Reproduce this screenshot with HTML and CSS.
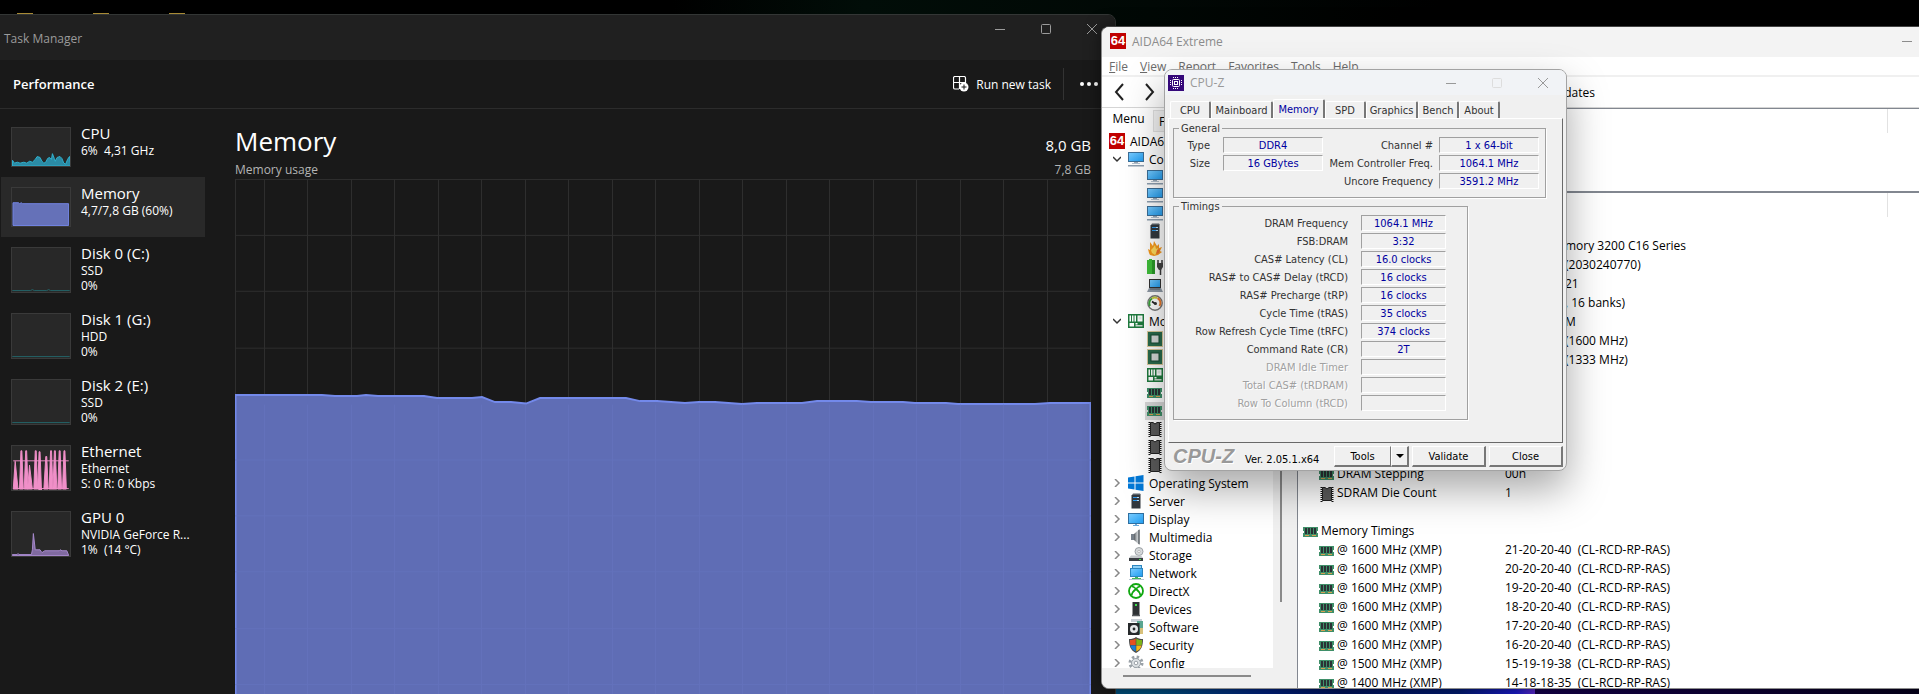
FILE: index.html
```html
<!DOCTYPE html>
<html lang="en">
<head>
    <meta charset="UTF-8">
    <meta name="viewport" content="width=device-width, initial-scale=1.0">
    <title>Desktop</title>
    <link rel="stylesheet" href="styles.css">
</head>
<body>
    <!-- Icon sprite -->
    <svg class="sprite" xmlns="http://www.w3.org/2000/svg">
        <defs>
            <linearGradient id="screenFill" x1="0" y1="0" x2="1" y2="1">
                <stop offset="0" stop-color="#7accff"/>
                <stop offset="1" stop-color="#1f9cf0"/>
            </linearGradient>
            <linearGradient id="metalFill" x1="0" y1="0" x2="1" y2="0">
                <stop offset="0" stop-color="#555b60"/>
                <stop offset="0.6" stop-color="#c9cdd0"/>
                <stop offset="1" stop-color="#777d82"/>
            </linearGradient>
        </defs>
        <symbol id="i-min" viewBox="0 0 10 10"><path d="M0 5.5h10" stroke="currentColor"/></symbol>
        <symbol id="i-max" viewBox="0 0 10 10"><rect x=".5" y=".5" width="9" height="9" rx="1" fill="none" stroke="currentColor"/></symbol>
        <symbol id="i-close" viewBox="0 0 10 10"><path d="M0 0l10 10M10 0L0 10" stroke="currentColor"/></symbol>
        <symbol id="i-monitor" viewBox="0 0 16 16">
            <rect x=".5" y="1.5" width="15" height="9" fill="url(#screenFill)" stroke="#3c6e96"/>
            <path d="M6 11h4v2H6z" fill="#9aa9b8"/><path d="M4 12h8v1H4z" fill="#b5c2cf"/><path d="M0 14h16v1.5H0z" fill="#8e9fb0"/>
        </symbol>
        <symbol id="i-display" viewBox="0 0 16 16">
            <rect x=".5" y="2.5" width="15" height="10" fill="url(#screenFill)" stroke="#2f6fa0"/>
            <path d="M7 13h2v1H7zM5 14h6v1H5z" fill="#6aa8d8"/>
        </symbol>
        <symbol id="i-server" viewBox="0 0 16 16">
            <path d="M5 .5h7l1 1.500H4z" fill="#5a626a"/><rect x="3.500" y="2" width="9" height="13.500" fill="#33393f"/>
            <path d="M5 4.500h6M5 7.500h6" stroke="#2d9bf0"/><path d="M9 4h2v1H9zM9 7h2v1H9z" fill="#b8e0ff"/>
        </symbol>
        <symbol id="i-fire" viewBox="0 0 16 16">
            <path d="M3 1l3 4 1-5 3 5 2-2 0 4 3-1-2 4 2 1-4 3-4 1-4-1-1-2-1-4 2 1z" fill="#f79a1c"/>
            <path d="M6 7l2-3 1 4 2-1-1 4-2 3-3-2-1-3z" fill="#ffdc5e"/><path d="M10 9l3-1-1 4-3 1z" fill="#f0702a"/>
        </symbol>
        <symbol id="i-power" viewBox="0 0 16 16">
            <path d="M2 0h3v1h3v14H0V1h2z" fill="#3fbf3a"/><path d="M5 1h3v14H5z" fill="#2b9a29"/>
            <path d="M11 1v4M15 1v4M13.500 10v6" stroke="#3a3a3a" stroke-width="1.500"/><path d="M10 4h6v4l-2 3h-2l-2-3z" fill="#444"/>
        </symbol>
        <symbol id="i-laptop" viewBox="0 0 16 16">
            <rect x="2.500" y="2.500" width="11" height="8" fill="url(#screenFill)" stroke="#333"/>
            <path d="M2 11h12l2 4H0z" fill="#8e99a5"/><path d="M3 12h10" stroke="#55606b"/>
        </symbol>
        <symbol id="i-gauge" viewBox="0 0 16 16">
            <circle cx="8" cy="8" r="7.200" fill="#fff" stroke="#777" stroke-width="1.400"/>
            <path d="M3 11A5.500 5.500 0 0 1 5 3.500" stroke="#3aa33a" stroke-width="2" fill="none"/>
            <path d="M5 3.500A5.500 5.500 0 0 1 10 3" stroke="#c8cf3c" stroke-width="2" fill="none"/>
            <path d="M10.500 3A5.500 5.500 0 0 1 12.500 11" stroke="#e8792b" stroke-width="2" fill="none"/>
            <path d="M8.500 9L5 6.500" stroke="#222" stroke-width="1.600"/><circle cx="8.500" cy="8.500" r="1.500" fill="#333"/>
        </symbol>
        <symbol id="i-board" viewBox="0 0 16 16">
            <path d="M0 1h16v14H0z" fill="#1f7a3e"/>
            <path d="M1.500 2.500h1.500v6H1.500zM4 2.500h1.500v6H4zM6.500 2.500H8v6H6.500zM9.500 2.500h5v6h-5zM1.500 10H6v3.500H1.500zM7.500 10h2v1.500h-2z" fill="#fff"/>
            <path d="M7.500 12H14.500V13.500H7.500z" fill="#c9d8ce"/><path d="M10.500 3.500h3v3h-3z" fill="#dfe8e2"/>
        </symbol>
        <symbol id="i-chip" viewBox="0 0 16 16">
            <rect x=".5" y=".5" width="15" height="15" fill="none" stroke="#b49338" stroke-dasharray="1 1"/>
            <rect x="1" y="1" width="14" height="14" fill="#2a6b4c"/><rect x="4" y="4" width="8" height="8" fill="#d3d8d6" stroke="#174a33"/>
        </symbol>
        <symbol id="i-ram" viewBox="0 0 16 16">
            <path d="M0 3h15v4h-1v2h1v4H0V9h1V7H0z" fill="#3f8f69"/>
            <path d="M2 4h2v6H2zM5 4h2v6H5zM8 4h2v6H8zM11 4h2v6h-2z" fill="#2b3135"/>
            <path d="M2 11.500h4M9 11.500h4" stroke="#d8a050"/>
        </symbol>
        <symbol id="i-ic" viewBox="0 0 16 16">
            <path d="M2.500 1v15M13.500 1v15" stroke="#111" stroke-width="2" stroke-dasharray="1 1"/>
            <path d="M3.500 1.500h2.500l2 1.500 2-1.500h2.500v13h-9z" fill="#5b5b5b" stroke="#222"/>
        </symbol>
        <symbol id="i-windows" viewBox="0 0 16 16">
            <path d="M0 2.500L6.500 1.500V7.500H0zM7.500 1.300L15.500 0V7.500H7.500zM0 8.500H6.500V14.500L0 13.500zM7.500 8.500H15.500V16L7.500 14.700z" fill="#0078d7"/>
        </symbol>
        <symbol id="i-speaker" viewBox="0 0 16 16">
            <path d="M3 5h3v6H3z" fill="#77808a"/><path d="M6 5l5.500-5v16L6 11z" fill="url(#metalFill)"/><path d="M11 1v14" stroke="#50565c"/>
        </symbol>
        <symbol id="i-storage" viewBox="0 0 16 16">
            <circle cx="11" cy="4.500" r="4" fill="#d7dadc" stroke="#9da2a6"/><circle cx="11" cy="4.500" r="1.200" fill="#fff" stroke="#999" stroke-width=".6"/>
            <path d="M3 8.500h10l2 2.500H1z" fill="#c4c8cb"/><path d="M1 11h14v3H1z" fill="#3b3f43"/><path d="M11 12h2v1h-2z" fill="#4be04b"/>
        </symbol>
        <symbol id="i-network" viewBox="0 0 16 16">
            <rect x="4.500" y=".5" width="9" height="7" fill="#8fd0f5" stroke="#2d86c0"/>
            <rect x="2.500" y="3.500" width="12" height="8" fill="url(#screenFill)" stroke="#2d86c0"/>
            <path d="M7 12h3v2H7zM4 13h9v2H4z" fill="#44b85a"/><path d="M1 14h15v1H1z" fill="#b9c6d1"/>
        </symbol>
        <symbol id="i-xbox" viewBox="0 0 16 16">
            <circle cx="8" cy="8" r="7" fill="#fff" stroke="#10a810" stroke-width="1.800"/>
            <path d="M4 3.500c2 0 3 1.500 4 2.500 1-1 2-2.500 4-2.500M3.500 12.500C4 9.500 6 7.500 8 6c2 1.500 4 3.500 4.500 6.500" fill="none" stroke="#10a810" stroke-width="1.700"/>
        </symbol>
        <symbol id="i-device" viewBox="0 0 16 16">
            <rect x="4.500" y="1" width="7" height="13" fill="#2e3235"/><path d="M7 3h2v2H7z" fill="#3de04a"/><path d="M4 14.500h8" stroke="#55595c" stroke-width="1.500"/>
        </symbol>
        <symbol id="i-software" viewBox="0 0 16 16">
            <path d="M3 0h11v3H3z" fill="#c8cfd6"/><path d="M9 2h6v13H9z" fill="#5aa590"/><path d="M12 9h3v6h-3z" fill="#d8c07a"/>
            <path d="M0 4h11.500v12H0z" fill="#26292b"/><circle cx="6" cy="10" r="4" fill="#e6e8ea"/><circle cx="6" cy="10" r="1.400" fill="#26292b"/>
        </symbol>
        <symbol id="i-shield" viewBox="0 0 16 16">
            <path d="M8 0c2 1.500 4 2 7 2 0 6-1 11-7 14C2 13 1 8 1 2c3 0 5-.5 7-2z" fill="#4a4a4a"/>
            <path d="M7.700 1.500V8H2.200C2 6 2 4.500 2 3c2.500 0 4-.5 5.700-1.500z" fill="#e8501e"/><path d="M8.300 1.500V8h5.500c.2-2 .2-3.500.2-5-2.500 0-4-.5-5.700-1.500z" fill="#7cb518"/>
            <path d="M7.700 8.500v6C4.500 13 3 11 2.300 8.500z" fill="#1b7fd6"/><path d="M8.300 8.500v6c3.200-1.500 4.700-3.500 5.400-6z" fill="#f7b916"/>
        </symbol>
        <symbol id="i-gear" viewBox="0 0 16 16">
            <circle cx="8" cy="8" r="6" fill="none" stroke="#9aa1a7" stroke-width="3" stroke-dasharray="2.400 2.300"/>
            <circle cx="8" cy="8" r="4.500" fill="#dde1e4" stroke="#9aa1a7"/><circle cx="8" cy="8" r="1.800" fill="#fff" stroke="#9aa1a7"/>
        </symbol>
        <symbol id="i-down" viewBox="0 0 8 8"><path d="M0 2l4 4 4-4" fill="none" stroke="#333" stroke-width="1.500"/></symbol>
        <symbol id="i-right" viewBox="0 0 8 8"><path d="M2 0l4 4-4 4" fill="none" stroke="#888" stroke-width="1.500"/></symbol>
    </svg>

    <!-- Desktop icons peeking above the first window -->
    <div class="folders"><span></span><span></span><span></span></div>

    <!-- Task Manager -->
    <section class="window taskmgr">
        <header class="tm-title">
            <span>Task Manager</span>
            <div class="controls">
                <button aria-label="Minimize"><svg><use href="#i-min"/></svg></button>
                <button aria-label="Maximize"><svg><use href="#i-max"/></svg></button>
                <button aria-label="Close"><svg><use href="#i-close"/></svg></button>
            </div>
        </header>
        <div class="tm-toolbar">
            <h1>Performance</h1>
            <button class="run-task">
                <svg viewBox="0 0 16 16" fill="none" stroke="#fff">
                    <path d="M6.500 .5H2A1.500 1.500 0 0 0 .5 2v9.500A1.500 1.500 0 0 0 2 13h4M.5 6.500h12V2A1.500 1.500 0 0 0 11 .5H6.500V13" stroke-width="1.200"/>
                    <circle cx="11" cy="11" r="4.500" fill="#fff" stroke="none"/><path d="M11 8.500v5M8.500 11h5" stroke="#191919"/>
                </svg>
                Run new task
            </button>
            <button class="more" aria-label="See more"><i></i><i></i><i></i></button>
        </div>
        <div class="tm-body">
            <nav class="tm-side">
                <a href="#" class="perf">
                    <svg class="mini" viewBox="0 0 60 40">
                        <path d="M0 40v-6l2 3 3-1 3 1 4-1 3 1 3-2 3 1 3-3 2-3 3 1 2 4 2 2 2-1 2-4 2-1 2 2 1-6 2 5 1 3 2-4 3-1 2 2 2 5 2 1 2-5 2-3 1 7v3z" fill="#2b8ba5" stroke="#2fb4d2"/>
                    </svg>
                    <span><b>CPU</b><small>6%&nbsp; 4,31 GHz</small></span>
                </a>
                <a href="#" class="perf active">
                    <svg class="mini" viewBox="0 0 60 40">
                        <path d="M.5 39.500V15.500h6l1 1 2-1 1 1h48.500v23z" fill="#6571b8" stroke="#7486e8"/>
                    </svg>
                    <span><b>Memory</b><small>4,7/7,8 GB (60%)</small></span>
                </a>
                <a href="#" class="perf tall">
                    <svg class="mini" viewBox="0 0 60 46"><path d="M0 44.500h19l2-1 2 1h13l2-1 2 1h20" fill="none" stroke="#24666a"/></svg>
                    <span><b>Disk 0 (C:)</b><small>SSD</small><small>0%</small></span>
                </a>
                <a href="#" class="perf tall">
                    <svg class="mini" viewBox="0 0 60 46"><path d="M0 44.500h60" stroke="#24666a"/></svg>
                    <span><b>Disk 1 (G:)</b><small>HDD</small><small>0%</small></span>
                </a>
                <a href="#" class="perf tall">
                    <svg class="mini" viewBox="0 0 60 46"><path d="M0 44.500h60" stroke="#24666a"/></svg>
                    <span><b>Disk 2 (E:)</b><small>SSD</small><small>0%</small></span>
                </a>
                <a href="#" class="perf tall">
                    <svg class="mini" viewBox="0 0 60 46">
                        <path d="M1 45L3 16l3 29zM7.500 45l1.500-40h1l1.500 40zM12.500 45L14 5h1l1.500 40zM16 45l2-25 3 25zM22.500 45L24 5h1l1.500 40zM26.500 45L28 6h1l1.500 40zM33 45l2-34h1l1.500 34zM38.500 45L40 5h1l1.500 40zM42.500 45L44 5h1l1.500 40zM47.500 45L49 5h1l1.500 40zM52.500 45L54 5h1l1.500 40z" fill="#f08fc8" stroke="#f08fc8"/>
                        <path d="M1 15.500h58M1 44.500h58" stroke="#f08fc8"/>
                    </svg>
                    <span><b>Ethernet</b><small>Ethernet</small><small>S: 0 R: 0 Kbps</small></span>
                </a>
                <a href="#" class="perf tall">
                    <svg class="mini" viewBox="0 0 60 46">
                        <path d="M0 44.500h5l1-1 1 1h13l1-5 1-17 2 17 5 0 2 3 3-2 15 0 1-1 2 1 5 0 2 5H0z" fill="#806aa0" stroke="#a98ad0"/>
                    </svg>
                    <span><b>GPU 0</b><small>NVIDIA GeForce R...</small><small>1%&nbsp; (14 °C)</small></span>
                </a>
            </nav>
            <main class="tm-main">
                <div class="main-head"><h2>Memory</h2><span>8,0 GB</span></div>
                <div class="main-sub"><span>Memory usage</span><span>7,8 GB</span></div>
                <svg class="chart" viewBox="0 0 856 562" preserveAspectRatio="none">
                    <path class="grid" d="M0 .5H856M0 56.500H856M0 112.500H856M0 169.500H856M0 225.500H856M0 281.500H856M0 337.500H856M0 393.500H856M0 450.500H856M0 506.500H856
                        M.5 0V562M29.500 0V562M72.500 0V562M116.500 0V562M159.500 0V562M203.500 0V562M246.500 0V562M290.500 0V562M333.500 0V562M377.500 0V562M420.500 0V562M464.500 0V562M507.500 0V562M551.500 0V562M594.500 0V562M638.500 0V562M681.500 0V562M725.500 0V562M768.500 0V562M812.500 0V562M855.500 0V562"/>
                    <path class="usage" d="M.5 570V216.500H87L100 217.500H122L131 216.500L143 217.500H189L202 219.500H237L247 218.500L260 223.500H276L291 225L305 219.500H391L405 222.500H422L450 224.500L464 223.500H480L507 225.500L522 224.500H567L582 222.500H622L636 223.500H668L680 224.500H711L723 225.500H800L815 224.500H855.500V570z"/>
                    <path class="grid over" d="M0 281.500H856M0 337.500H856M0 393.500H856M0 450.500H856M0 506.500H856
                        M29.500 226V562M72.500 226V562M116.500 226V562M159.500 226V562M203.500 226V562M246.500 226V562M290.500 226V562M333.500 226V562M377.500 226V562M420.500 226V562M464.500 226V562M507.500 226V562M551.500 226V562M594.500 226V562M638.500 226V562M681.500 226V562M725.500 226V562M768.500 226V562M812.500 226V562"/>
                </svg>
            </main>
        </div>
    </section>

    <!-- AIDA64 -->
    <section class="window aida">
        <header class="ai-title">
            <span class="logo64">64</span>
            <span>AIDA64 Extreme</span>
            <div class="controls">
                <button aria-label="Minimize"><svg><use href="#i-min"/></svg></button>
            </div>
        </header>
        <nav class="ai-menu">
            <button><u>F</u>ile</button>
            <button><u>V</u>iew</button>
            <button>Report</button>
            <button>Favorites</button>
            <button>Tools</button>
            <button>Help</button>
        </nav>
        <div class="ai-toolbar">
            <button aria-label="Back"><svg viewBox="0 0 10 18"><path d="M9 1L2 9l7 8"/></svg></button>
            <button aria-label="Forward"><svg viewBox="0 0 10 18"><path d="M1 1l7 8-7 8"/></svg></button>
            <button class="updates">Updates</button>
        </div>
        <div class="ai-body">
            <aside class="ai-left">
                <div class="ai-tabs"><button class="on">Menu</button><button>Favorites</button></div>
                <div class="tree-wrap">
                    <ul class="tree">
                        <li class="root"><span class="logo64">64</span>AIDA64</li>
                        <li><svg class="arr"><use href="#i-down"/></svg><svg class="ico"><use href="#i-monitor"/></svg>Computer</li>
                        <li class="sub"><svg class="ico"><use href="#i-monitor"/></svg></li>
                        <li class="sub"><svg class="ico"><use href="#i-monitor"/></svg></li>
                        <li class="sub"><svg class="ico"><use href="#i-monitor"/></svg></li>
                        <li class="sub"><svg class="ico"><use href="#i-server"/></svg></li>
                        <li class="sub"><svg class="ico"><use href="#i-fire"/></svg></li>
                        <li class="sub"><svg class="ico"><use href="#i-power"/></svg></li>
                        <li class="sub"><svg class="ico"><use href="#i-laptop"/></svg></li>
                        <li class="sub"><svg class="ico"><use href="#i-gauge"/></svg></li>
                        <li><svg class="arr"><use href="#i-down"/></svg><svg class="ico"><use href="#i-board"/></svg>Motherboard</li>
                        <li class="sub"><svg class="ico"><use href="#i-chip"/></svg></li>
                        <li class="sub"><svg class="ico"><use href="#i-chip"/></svg></li>
                        <li class="sub"><svg class="ico"><use href="#i-board"/></svg></li>
                        <li class="sub"><svg class="ico"><use href="#i-ram"/></svg></li>
                        <li class="sub selected"><svg class="ico"><use href="#i-ram"/></svg></li>
                        <li class="sub"><svg class="ico"><use href="#i-ic"/></svg></li>
                        <li class="sub"><svg class="ico"><use href="#i-ic"/></svg></li>
                        <li class="sub"><svg class="ico"><use href="#i-ic"/></svg></li>
                        <li><svg class="arr"><use href="#i-right"/></svg><svg class="ico"><use href="#i-windows"/></svg>Operating System</li>
                        <li><svg class="arr"><use href="#i-right"/></svg><svg class="ico"><use href="#i-server"/></svg>Server</li>
                        <li><svg class="arr"><use href="#i-right"/></svg><svg class="ico"><use href="#i-display"/></svg>Display</li>
                        <li><svg class="arr"><use href="#i-right"/></svg><svg class="ico"><use href="#i-speaker"/></svg>Multimedia</li>
                        <li><svg class="arr"><use href="#i-right"/></svg><svg class="ico"><use href="#i-storage"/></svg>Storage</li>
                        <li><svg class="arr"><use href="#i-right"/></svg><svg class="ico"><use href="#i-network"/></svg>Network</li>
                        <li><svg class="arr"><use href="#i-right"/></svg><svg class="ico"><use href="#i-xbox"/></svg>DirectX</li>
                        <li><svg class="arr"><use href="#i-right"/></svg><svg class="ico"><use href="#i-device"/></svg>Devices</li>
                        <li><svg class="arr"><use href="#i-right"/></svg><svg class="ico"><use href="#i-software"/></svg>Software</li>
                        <li><svg class="arr"><use href="#i-right"/></svg><svg class="ico"><use href="#i-shield"/></svg>Security</li>
                        <li><svg class="arr"><use href="#i-right"/></svg><svg class="ico"><use href="#i-gear"/></svg>Config</li>
                    </ul>
                    <div class="vscroll"><i></i></div>
                </div>
                <div class="hscroll"><i></i></div>
            </aside>
            <div class="ai-right">
                <div class="pane-top"><div class="colhead"></div></div>
                <div class="pane-bottom">
                    <div class="colhead"></div>
                    <table class="details">
                        <tr><td></td><td></td></tr>
                        <tr><td></td><td class="tail">mory 3200 C16 Series</td></tr>
                        <tr><td></td><td class="tail">(2030240770)</td></tr>
                        <tr><td></td><td class="tail">21</td></tr>
                        <tr><td></td><td class="tail">, 16 banks)</td></tr>
                        <tr><td></td><td class="tail">M</td></tr>
                        <tr><td></td><td class="tail">(1600 MHz)</td></tr>
                        <tr><td></td><td class="tail">(1333 MHz)</td></tr>
                        <tr><td></td><td></td></tr>
                        <tr><td></td><td></td></tr>
                        <tr><td></td><td></td></tr>
                        <tr><td></td><td></td></tr>
                        <tr><td></td><td></td></tr>
                        <tr><td><svg class="ico"><use href="#i-ram"/></svg>DRAM Stepping</td><td>00h</td></tr>
                        <tr><td><svg class="ico"><use href="#i-ic"/></svg>SDRAM Die Count</td><td>1</td></tr>
                        <tr><td></td><td></td></tr>
                        <tr class="group"><td><svg class="ico"><use href="#i-ram"/></svg>Memory Timings</td><td></td></tr>
                        <tr><td><svg class="ico"><use href="#i-ram"/></svg>@ 1600 MHz (XMP)</td><td>21-20-20-40&nbsp; (CL-RCD-RP-RAS)</td></tr>
                        <tr><td><svg class="ico"><use href="#i-ram"/></svg>@ 1600 MHz (XMP)</td><td>20-20-20-40&nbsp; (CL-RCD-RP-RAS)</td></tr>
                        <tr><td><svg class="ico"><use href="#i-ram"/></svg>@ 1600 MHz (XMP)</td><td>19-20-20-40&nbsp; (CL-RCD-RP-RAS)</td></tr>
                        <tr><td><svg class="ico"><use href="#i-ram"/></svg>@ 1600 MHz (XMP)</td><td>18-20-20-40&nbsp; (CL-RCD-RP-RAS)</td></tr>
                        <tr><td><svg class="ico"><use href="#i-ram"/></svg>@ 1600 MHz (XMP)</td><td>17-20-20-40&nbsp; (CL-RCD-RP-RAS)</td></tr>
                        <tr><td><svg class="ico"><use href="#i-ram"/></svg>@ 1600 MHz (XMP)</td><td>16-20-20-40&nbsp; (CL-RCD-RP-RAS)</td></tr>
                        <tr><td><svg class="ico"><use href="#i-ram"/></svg>@ 1500 MHz (XMP)</td><td>15-19-19-38&nbsp; (CL-RCD-RP-RAS)</td></tr>
                        <tr><td><svg class="ico"><use href="#i-ram"/></svg>@ 1400 MHz (XMP)</td><td>14-18-18-35&nbsp; (CL-RCD-RP-RAS)</td></tr>
                    </table>
                </div>
            </div>
        </div>
    </section>

    <!-- CPU-Z -->
    <section class="window cpuz">
        <header class="cz-title">
            <svg class="cz-icon" viewBox="0 0 16 16">
                <path d="M0 0h16v16H0z" fill="#35087a"/>
                <rect x="4.500" y="4.500" width="7" height="7" rx="1" fill="none" stroke="#fff"/><rect x="6.500" y="6.500" width="3" height="3" fill="none" stroke="#fff"/>
                <path d="M5 2.500h6M5 13.500h6M2.500 5v6M13.500 5v6" stroke="#fff" stroke-dasharray="1 1"/>
            </svg>
            <span>CPU-Z</span>
            <div class="controls">
                <button aria-label="Minimize"><svg><use href="#i-min"/></svg></button>
                <button aria-label="Maximize" disabled><svg><use href="#i-max"/></svg></button>
                <button aria-label="Close"><svg><use href="#i-close"/></svg></button>
            </div>
        </header>
        <div class="cz-tabs">
            <button class="w40">CPU</button>
            <button class="w60">Mainboard</button>
            <button class="w52 on">Memory</button>
            <button class="w40">SPD</button>
            <button class="w52">Graphics</button>
            <button class="w40">Bench</button>
            <button class="w40">About</button>
        </div>
        <div class="cz-page">
            <fieldset class="general">
                <legend>General</legend>
                <label for="type">Type</label><input id="type" value="DDR4" readonly>
                <label for="channel">Channel #</label><input id="channel" value="1 x 64-bit" readonly>
                <label for="size">Size</label><input id="size" value="16 GBytes" readonly>
                <label for="mcf">Mem Controller Freq.</label><input id="mcf" value="1064.1 MHz" readonly>
                <label for="uncore" class="third">Uncore Frequency</label><input id="uncore" value="3591.2 MHz" readonly>
            </fieldset>
            <fieldset class="timings">
                <legend>Timings</legend>
                <label for="dram">DRAM Frequency</label><input id="dram" value="1064.1 MHz" readonly>
                <label for="fsb">FSB:DRAM</label><input id="fsb" value="3:32" readonly>
                <label for="cl">CAS# Latency (CL)</label><input id="cl" value="16.0 clocks" readonly>
                <label for="trcd">RAS# to CAS# Delay (tRCD)</label><input id="trcd" value="16 clocks" readonly>
                <label for="trp">RAS# Precharge (tRP)</label><input id="trp" value="16 clocks" readonly>
                <label for="tras">Cycle Time (tRAS)</label><input id="tras" value="35 clocks" readonly>
                <label for="trfc">Row Refresh Cycle Time (tRFC)</label><input id="trfc" value="374 clocks" readonly>
                <label for="cr">Command Rate (CR)</label><input id="cr" value="2T" readonly>
                <label for="idle" class="off">DRAM Idle Timer</label><input id="idle" disabled>
                <label for="trdram" class="off">Total CAS# (tRDRAM)</label><input id="trdram" disabled>
                <label for="rtc" class="off">Row To Column (tRCD)</label><input id="rtc" disabled>
            </fieldset>
        </div>
        <footer class="cz-foot">
            <strong>CPU-Z</strong>
            <span>Ver. 2.05.1.x64</span>
            <div class="split"><button>Tools</button><button class="drop" aria-label="Tools menu"><svg viewBox="0 0 8 4"><path d="M0 0h8L4 4z"/></svg></button></div>
            <button>Validate</button>
            <button>Close</button>
        </footer>
    </section>
</body>
</html>
```

FILE: styles.css
```css
/* Reset */
* {
    margin: 0;
    padding: 0;
    box-sizing: border-box;
}

body {
    height: 100vh;
    overflow: hidden;
    position: relative;
    background: linear-gradient(90deg, #000 0%, #000 35%, #010d08 45%, #010805 60%, #000 75%);
    font-family: "Open Sans", "Noto Sans", sans-serif;
    font-size: 12px;
}

/* wallpaper strip along the bottom edge */
body::after {
    content: "";
    position: absolute;
    left: 0;
    right: 0;
    bottom: 0;
    height: 20px;
    background: linear-gradient(90deg, #004d78 0%, #004d78 60%, #00207a 66%, #001258 70%, #001a6e 76%, #1a1ac8 79%, #5a28c8 80%, #14004a 80%, #0e0038 90%, #06001c 100%);
}

button {
    font: inherit;
    color: inherit;
    background: none;
    border: 0;
}

.sprite {
    position: absolute;
    width: 0;
    height: 0;
}

.folders {
    display: flex;
    gap: 60px;
    padding: 13px 0 0 17px;
}

.folders span {
    width: 16px;
    height: 2px;
    background: #a88a35;
}

/* Windows on the desktop */
.window {
    position: absolute;
    display: flex;
    flex-direction: column;
    overflow: hidden;
}

.controls {
    display: flex;
    margin-left: auto;
}

.controls button {
    width: 46px;
    height: 30px;
    display: flex;
    align-items: center;
    justify-content: center;
}

.controls svg {
    width: 10px;
    height: 10px;
}

/* Task Manager */
.taskmgr {
    top: 14px;
    left: -1px;
    right: 803px;
    bottom: -60px;
    background: #191919;
    border: 1px solid #333635;
    border-radius: 0 8px 0 0;
    color: #fff;
    z-index: 1;
}

.tm-title {
    display: flex;
    height: 45px;
    background: #202020;
    color: #9b9b9b;
}

.tm-title > span {
    padding: 16px 0 0 4px;
    line-height: 16px;
}

.tm-title .controls button {
    height: 28px;
}

.tm-toolbar {
    display: flex;
    align-items: center;
    height: 49px;
    padding: 0 17px 0 13px;
    border-bottom: 1px solid #2c2c2c;
}

.tm-toolbar h1 {
    font-size: 13px;
    font-weight: 600;
    margin-right: auto;
}

.run-task {
    display: flex;
    align-items: center;
    gap: 7px;
    padding-right: 12px;
    height: 32px;
    border-right: 1px solid #333;
}

.run-task svg {
    width: 16px;
    height: 16px;
}

.more {
    display: flex;
    gap: 3px;
    padding-left: 16px;
}

.more i {
    width: 4px;
    height: 4px;
    border-radius: 2px;
    background: #fff;
}

.tm-body {
    flex: 1;
    display: flex;
    min-height: 0;
}

.tm-side {
    width: 205px;
    padding-top: 8px;
}

.perf {
    display: flex;
    gap: 10px;
    height: 60px;
    margin-left: 1px;
    padding: 6px 0 0 10px;
    color: #fff;
    text-decoration: none;
    white-space: nowrap;
}

.perf.tall {
    height: 66px;
}

.perf.active {
    background: #292929;
}

.mini {
    width: 60px;
    height: 40px;
    margin-top: 4px;
    background: #282828;
    border: 1px solid #3a3a3a;
}

.tall .mini {
    height: 46px;
}

.perf b {
    display: block;
    font-size: 15px;
    font-weight: 400;
    line-height: 20px;
}

.perf small {
    display: block;
    font-size: 12px;
    line-height: 15px;
}

.tm-main {
    flex: 1;
    display: flex;
    flex-direction: column;
    padding: 12px 24px 13px 30px;
}

.main-head {
    display: flex;
    justify-content: space-between;
    align-items: baseline;
    font-size: 15px;
}

.main-head h2 {
    font-size: 26px;
    font-weight: 400;
    line-height: 40px;
}

.main-sub {
    display: flex;
    justify-content: space-between;
    line-height: 18px;
    color: #b4b4b4;
}

.chart {
    flex: 1;
    width: 100%;
    min-height: 0;
}

.chart path {
    vector-effect: non-scaling-stroke;
}

.grid {
    fill: none;
    stroke: #2e2e2e;
}

.grid.over {
    stroke: #6675c0;
    opacity: 0.6;
}

.usage {
    fill: #5f6db5;
    stroke: #7389ea;
    stroke-width: 2;
}

/* AIDA64 */
.aida {
    top: 26px;
    right: -40px;
    bottom: 5px;
    width: 858px;
    background: #fff;
    border: 1px solid #8d8d8d;
    border-top-color: #444;
    border-radius: 8px;
    box-shadow: 0 0 16px rgba(0, 0, 0, 0.5);
    z-index: 2;
}

.logo64 {
    width: 16px;
    height: 16px;
    flex: none;
    background: #c00000;
    color: #fff;
    font: bold 13px/16px "Liberation Sans", sans-serif;
    text-align: center;
}

.ai-title {
    display: flex;
    align-items: center;
    gap: 6px;
    height: 30px;
    padding: 0 28px 2px 8px;
    background: #f3f3f3;
    color: #8c8c8c;
}

.ai-menu {
    display: flex;
    gap: 12px;
    height: 20px;
    padding-left: 7px;
    border-bottom: 2px solid #f0f0f0;
    color: #6b6b6b;
}

.ai-toolbar {
    display: flex;
    align-items: center;
    height: 31px;
    padding-left: 12px;
    border-bottom: 1px solid #d5d5d5;
}

.ai-toolbar button + button {
    margin-left: 21px;
}

.ai-toolbar svg {
    display: block;
    width: 10px;
    height: 18px;
    fill: none;
    stroke: #222;
    stroke-width: 2;
}

.ai-toolbar .updates {
    width: 62px;
    margin-left: 378px !important;
    text-align: right;
}

.ai-body {
    flex: 1;
    display: flex;
    min-height: 0;
}

.ai-left {
    width: 195px;
    display: flex;
    flex-direction: column;
    background: #f0f0f0;
    border-right: 6px solid #f0f0f0;
}

.ai-tabs {
    display: flex;
    height: 24px;
    background: #fff;
}

.ai-tabs button {
    height: 22px;
    margin-top: 2px;
    padding: 0 5px;
    background: #f3f3f3;
    border: 1px solid #e0e0e0;
}

.ai-tabs .on {
    width: 51px;
    height: 20px;
    margin: 0;
    padding: 0 0 0 2px;
    background: #fff;
    border: 0;
}

.tree-wrap {
    flex: 1;
    display: flex;
    min-height: 0;
}

.tree {
    flex: 1;
    overflow: hidden;
    list-style: none;
    background: #fff;
}

.tree li {
    display: flex;
    align-items: center;
    height: 18px;
    padding-left: 11px;
}

.tree .root {
    gap: 5px;
    padding-left: 7px;
}

.tree .sub {
    padding-left: 45px;
}

.tree .selected {
    background: linear-gradient(90deg, #fff 43px, #d9d9d9 43px);
}

.arr {
    width: 8px;
    height: 8px;
    margin-right: 7px;
    flex: none;
}

.ico {
    width: 16px;
    height: 16px;
    margin-right: 5px;
    flex: none;
}

.vscroll {
    display: flex;
    width: 18px;
    padding-left: 7px;
    background: #f0f0f0;
}

.vscroll i {
    width: 2px;
    height: 470px;
    background: #8a8a8a;
}

.hscroll {
    height: 20px;
    padding: 7px 0 0 21px;
}

.hscroll i {
    display: block;
    width: 128px;
    height: 2px;
    background: #8a8a8a;
}

.ai-right {
    flex: 1;
    display: flex;
    flex-direction: column;
    min-width: 0;
    border-left: 1px solid #828790;
    border-top: 1px solid #828790;
}

.pane-top {
    height: 84px;
    border-bottom: 2px solid #828790;
}

.pane-bottom {
    flex: 1;
    min-height: 0;
    overflow: hidden;
}

.colhead {
    width: 590px;
    height: 24px;
    border-right: 1px solid #e2e2e2;
}

.details {
    border-collapse: collapse;
    table-layout: fixed;
    width: 100%;
}

.details td {
    height: 19px;
    line-height: 19px;
    padding-left: 21px;
    white-space: nowrap;
}

.details td:first-child {
    width: 185px;
}

.details td + td {
    padding-left: 22px;
}

.details td.tail {
    padding-left: 82px;
}

.details .group td {
    padding-left: 5px;
}

.details .ico {
    margin-right: 2px;
    vertical-align: middle;
}

/* CPU-Z */
.cpuz {
    top: 69px;
    right: 352px;
    width: 403px;
    background: #f0f0f0;
    border: 1px solid #a3a3a3;
    border-radius: 8px;
    box-shadow: 0 18px 40px rgba(0, 0, 0, 0.35);
    font-family: "DejaVu Sans Condensed", "Liberation Sans", sans-serif;
    font-size: 11px;
    color: #333;
    z-index: 3;
}

.cz-title {
    display: flex;
    align-items: center;
    gap: 6px;
    height: 25px;
    padding-left: 3px;
    background: #f1f3f6;
    font-family: "Open Sans", "Noto Sans", sans-serif;
    font-size: 12px;
    color: #999;
}

.cz-title .controls button {
    height: 24px;
}

.controls button:disabled {
    color: #ddd;
}

.cz-icon {
    width: 16px;
    height: 16px;
}

.cz-tabs {
    display: flex;
    align-items: flex-end;
    height: 23px;
    padding-left: 5px;
}

.cz-tabs button {
    height: 17px;
    border-top: 1px solid #fff;
    border-left: 1px solid #fff;
    border-right: 2px solid #777;
    border-radius: 2px 2px 0 0;
    white-space: nowrap;
}

.cz-tabs .w40 {
    width: 41px;
}

.cz-tabs .w52 {
    width: 52px;
}

.cz-tabs .w60 {
    width: 62px;
}

.cz-tabs .on {
    height: 19px;
    color: #0000a0;
}

.cz-page {
    height: 325px;
    margin: 0 3px;
    padding: 2px 0 0 4px;
    border: 1px solid #fff;
    border-right-color: #696969;
    border-bottom-color: #696969;
}

fieldset {
    display: grid;
    row-gap: 2px;
    padding: 2px 0 8px;
    margin-bottom: 1px;
    border: 1px solid #a0a0a0;
    box-shadow: 1px 1px 0 #fff;
}

legend {
    height: 14px;
    line-height: 16px;
    margin-left: 5px;
    padding: 0 2px;
}

.general {
    width: 373px;
    grid-template-columns: 49px 100px 116px 100px;
}

.timings {
    width: 295px;
    grid-template-columns: 187px 85px;
}

fieldset label {
    line-height: 18px;
    height: 16px;
    padding-right: 13px;
    text-align: right;
    white-space: nowrap;
}

.general label:nth-of-type(even),
.general .third {
    padding-right: 6px;
}

.third {
    grid-column: 3;
}

.off {
    color: #a0a0a0;
    text-shadow: 1px 1px 0 #fff;
}

fieldset input {
    width: 100%;
    height: 16px;
    font: inherit;
    color: #0000a0;
    text-align: center;
    background: #f0f0f0;
    border: 1px solid #a0a0a0;
    border-right-color: #fff;
    border-bottom-color: #fff;
}

.cz-foot {
    display: flex;
    gap: 3px;
    height: 27px;
    padding: 3px 3px 3px 8px;
    color: #000;
}

.cz-foot strong {
    width: 69px;
    font: italic bold 20px/21px "Liberation Sans", sans-serif;
    color: #999;
    text-shadow: 1px 1px 0 #fff;
}

.cz-foot span {
    flex: 1;
    line-height: 28px;
    white-space: nowrap;
}

.cz-foot button {
    width: 74px;
    height: 21px;
    border: 1px solid #fff;
    border-right: 2px solid #777;
    border-bottom: 2px solid #777;
}

.split {
    display: flex;
}

.cz-foot .split button:first-child {
    width: 57px;
    border-right: 1px solid #777;
}

.cz-foot .drop {
    width: 18px;
    display: flex;
    align-items: center;
    justify-content: center;
}

.drop svg {
    width: 8px;
    height: 4px;
}
```
